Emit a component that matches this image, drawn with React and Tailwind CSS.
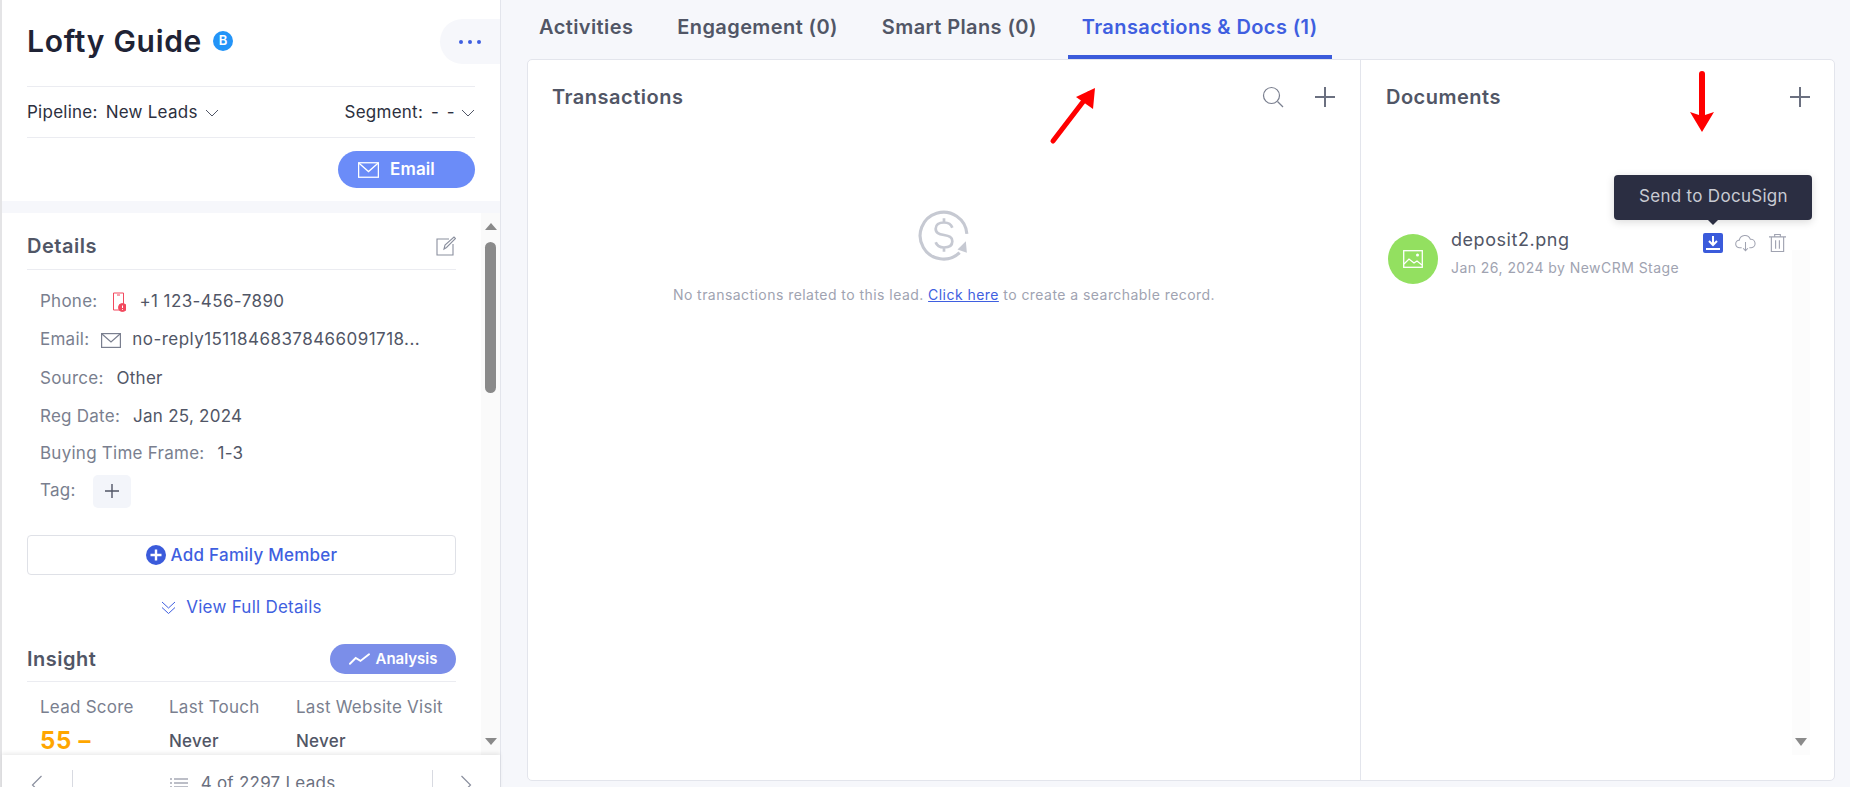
import React from "react";

const Chevron = ({ className = "" }) => (
  <svg viewBox="0 0 14 8" className={className} fill="none" stroke="currentColor" strokeWidth="1">
    <path d="M1 1l6 6 6-6" />
  </svg>
);

const Plus = ({ className = "" }) => (
  <svg viewBox="0 0 20 20" className={className} fill="none" stroke="currentColor" strokeWidth="2">
    <path d="M10 0v20M0 10h20" />
  </svg>
);

const Mail = ({ className = "" }) => (
  <svg viewBox="0 0 20 15" className={className} fill="none" stroke="currentColor" strokeWidth="1.2">
    <rect x="0.6" y="0.6" width="18.8" height="13.8" />
    <path d="M1 1l9 8 9-8" />
  </svg>
);

const Row = ({ label, children, className = "" }) => (
  <div className={`flex items-center h-[38px] pl-[13px] text-[17px] tracking-[0.25px] ${className}`}>
    <span className="text-[#7a7f8f] whitespace-nowrap">{label}</span>
    {children}
  </div>
);

const Tab = ({ children, active, className = "" }) => (
  <div
    className={`h-[59px] flex items-start pt-[15px] text-[20px] leading-[24px] tracking-[0.4px] font-semibold whitespace-nowrap border-b-[4px] ${
      active ? "text-[#3f5fe0] border-[#3b5bdb] px-[14px]" : "text-[#515666] border-transparent"
    } ${className}`}
  >
    {children}
  </div>
);

export default function App() {
  return (
    <div
      className="relative flex w-[1850px] h-[787px] overflow-hidden bg-[#f6f7fb]"
      style={{ fontFamily: "Inter, 'Noto Sans', sans-serif" }}
    >
      {/* Left panel */}
      <aside className="w-[501px] h-full flex flex-col shrink-0 border-l-2 border-r border-l-[#e4e4e6] border-r-[#e3e5ec] bg-[#f6f7fb]">
        <div className="h-[201px] bg-white pl-[25px] shrink-0">
          <div className="h-[86px] flex items-start">
            <div className="flex items-center pt-[22px]">
              <span className="text-[30px] leading-[38px] tracking-[0.7px] font-semibold text-[#1f2335] whitespace-nowrap">Lofty Guide</span>
              <span className="ml-[11px] w-[20px] h-[20px] rounded-full bg-[#2394f8] text-white text-[13px] font-semibold flex items-center justify-center">B</span>
            </div>
            <button className="ml-auto mt-[19px] w-[60px] h-[45px] rounded-l-[23px] bg-[#f6f7fb] flex items-center justify-center gap-[5px]">
              <i className="w-[4px] h-[4px] rounded-full bg-[#3f5fe0]" />
              <i className="w-[4px] h-[4px] rounded-full bg-[#3f5fe0]" />
              <i className="w-[4px] h-[4px] rounded-full bg-[#3f5fe0]" />
            </button>
          </div>
          <div className="w-[448px] border-t border-b border-[#ebecf1] h-[52px] pt-[2px] flex items-center justify-between text-[17px] tracking-[0.25px] text-[#2c3040]">
            <div className="flex items-center whitespace-nowrap">
              Pipeline:<span className="ml-[8px]">New Leads</span>
              <Chevron className="w-[14px] h-[8px] ml-[7px] text-[#515666]" />
            </div>
            <div className="flex items-center whitespace-nowrap">
              Segment:<span className="ml-[8px] tracking-[1.5px]">- -</span>
              <Chevron className="w-[14px] h-[8px] ml-[5px] text-[#515666]" />
            </div>
          </div>
          <div className="w-[448px] flex justify-end mt-[13px]">
            <button className="w-[137px] h-[37px] rounded-full bg-[#6b8cf8] text-white text-[17px] tracking-[0.1px] font-semibold flex items-center justify-center gap-[11px] pr-[20px]">
              <Mail className="w-[21px] h-[16px]" />
              Email
            </button>
          </div>
        </div>

        <div className="h-[12px] shrink-0" />

        <div className="relative h-[542px] shrink-0 bg-white overflow-hidden flex">
          <div className="w-[479px] pl-[25px] pr-[25px] shrink-0">
            <div className="h-[57px] border-b border-[#ebecf1] flex items-center justify-between pt-[9px] text-[20px] tracking-[0.5px] font-semibold text-[#515666]">
              Details
              <svg viewBox="0 0 20 20" className="w-[20px] h-[20px] text-[#8a8f9e]" fill="none" stroke="currentColor" strokeWidth="1.1">
                <path d="M13 3H1v16h16V8" />
                <path d="M8 13l1-4 9-8 1.5 1.5-9 9z" />
              </svg>
            </div>
            <div className="pt-[13px]">
              <Row label="Phone:">
                <svg viewBox="0 0 14 20" className="w-[14px] h-[20px] ml-[15px] text-[#f2495e]" fill="none" stroke="currentColor" strokeWidth="1">
                  <path d="M7 18H1.5V1h10v11" />
                  <path d="M5 3h3" />
                  <circle cx="10.5" cy="15.5" r="4" fill="currentColor" />
                  <path d="M10.5 13.5v2.5M10.5 17v.8" stroke="#fff" />
                </svg>
                <span className="ml-[13px] text-[#515666] tracking-[0.4px]">+1 123-456-7890</span>
              </Row>
              <Row label="Email:">
                <Mail className="w-[20px] h-[15px] ml-[12px] text-[#7a7f8f]" />
                <span className="ml-[11px] text-[#515666] tracking-[0.45px] w-[300px] truncate">no-reply15118468378466091718...</span>
              </Row>
              <Row label="Source:" className="pt-[1px]">
                <span className="ml-[13px] text-[#515666]">Other</span>
              </Row>
              <Row label="Reg Date:" className="pt-[1px]">
                <span className="ml-[13px] text-[#515666]">Jan 25, 2024</span>
              </Row>
              <Row label="Buying Time Frame:">
                <span className="ml-[13px] text-[#515666]">1-3</span>
              </Row>
              <Row label="Tag:" className="-mt-[1px]">
                <span className="ml-[17px] w-[38px] h-[33px] rounded-[5px] bg-[#f3f5fa] flex items-center justify-center text-[#515666]">
                  <Plus className="w-[14px] h-[14px]" />
                </span>
              </Row>
            </div>
            <button className="mt-[25px] w-full h-[40px] pt-[2px] border border-[#dfe1e7] rounded-[4px] flex items-center justify-center text-[17px] tracking-[0.25px] font-medium text-[#3f5fe0]">
              <svg viewBox="0 0 20 20" className="w-[20px] h-[20px] mr-[5px] -mt-[2px]">
                <circle cx="10" cy="10" r="10" fill="#3b5bdb" />
                <path d="M10 4.5v11M4.5 10h11" stroke="#fff" strokeWidth="2.4" />
              </svg>
              Add Family Member
            </button>
            <div className="mt-[20px] h-[26px] flex items-center justify-center text-[17px] tracking-[0.25px] text-[#3f5fe0]">
              <svg viewBox="0 0 14 14" className="w-[15px] h-[14px] mr-[10px]" fill="none" stroke="currentColor" strokeWidth="1">
                <path d="M0.5 1l6.5 6 6.5-6M0.5 6.5l6.5 6 6.5-6" />
              </svg>
              View Full Details
            </div>
            <div className="mt-[23px] h-[38px] border-b border-[#ebecf1] flex items-start justify-between">
              <span className="text-[20px] leading-[30px] tracking-[0.5px] font-semibold text-[#515666]">Insight</span>
              <button className="w-[126px] h-[30px] rounded-full bg-[#7b8ee9] text-white text-[15px] font-semibold flex items-center justify-center gap-[6px]">
                <svg viewBox="0 0 22 12" className="w-[21px] h-[12px]" fill="none" stroke="currentColor" strokeWidth="2" strokeLinecap="round">
                  <path d="M1 11l6-6 5 3 9-7" />
                </svg>
                Analysis
              </button>
            </div>
            <div className="flex pl-[13px] pt-[15px] text-[17px] tracking-[0.25px]">
              <div className="w-[129px]">
                <div className="text-[#7a7f8f] leading-[20px] whitespace-nowrap">Lead Score</div>
                <div className="text-[24px] leading-[28px] mt-[10px] font-bold tracking-[0.7px] text-[#ffa600]">55 –</div>
              </div>
              <div className="w-[127px]">
                <div className="text-[#7a7f8f] leading-[20px] whitespace-nowrap">Last Touch</div>
                <div className="mt-[14px] leading-[20px] font-medium text-[#515666]">Never</div>
              </div>
              <div>
                <div className="text-[#7a7f8f] leading-[20px] whitespace-nowrap">Last Website Visit</div>
                <div className="mt-[14px] leading-[20px] font-medium text-[#515666]">Never</div>
              </div>
            </div>
          </div>
          <div className="relative w-[19px] shrink-0 bg-[#fafafa] flex flex-col items-center pt-[10px]">
            <i className="w-0 h-0 border-x-[6px] border-x-transparent border-b-[7px] border-b-[#8a8a8a]" />
            <i className="mt-[12px] w-[11px] h-[151px] rounded-[6px] bg-[#8a8a8a]" />
            <i className="mt-auto mb-[10px] w-0 h-0 border-x-[6px] border-x-transparent border-t-[7px] border-t-[#8a8a8a]" />
          </div>
        </div>

        <div className="relative flex-1 bg-white shadow-[0_-2px_4px_rgba(0,0,0,0.08)] flex items-start text-[#515666]">
          <div className="w-[70px] h-full flex pt-[20px] justify-start pl-[28px]">
            <svg viewBox="0 0 12 20" className="w-[13px] h-[20px] text-[#8a8f9e]" fill="none" stroke="currentColor" strokeWidth="1.2"><path d="M11 1L2 10l9 9" /></svg>
          </div>
          <div className="mt-[15px] flex-1 h-[17px] border-x border-[#d8dae1] flex items-start justify-center">
            <div className="flex items-center pt-[3px] text-[17px] tracking-[0.25px] whitespace-nowrap leading-[20px] text-[#6b7080]">
              <svg viewBox="0 0 18 10" className="w-[18px] h-[10px] mr-[13px] text-[#7a7f8f]" fill="none" stroke="currentColor" strokeWidth="1.2">
                <path d="M4 1h14M4 5h14M4 9h14M0 1h2M0 5h2M0 9h2" />
              </svg>
              4 of 2297 Leads
            </div>
          </div>
          <div className="w-[67px] h-full flex pt-[20px] pl-[27px]">
            <svg viewBox="0 0 12 20" className="w-[13px] h-[20px] text-[#8a8f9e]" fill="none" stroke="currentColor" strokeWidth="1.2"><path d="M1 1l9 9-9 9" /></svg>
          </div>
        </div>
      </aside>

      {/* Main */}
      <main className="flex-1 flex flex-col pl-[26px] pr-[15px] pb-[6px] min-w-0">
        <nav className="h-[59px] shrink-0 flex pl-[12px]">
          <Tab>Activities</Tab>
          <Tab className="ml-[44px]">Engagement (0)</Tab>
          <Tab className="ml-[44px]">Smart Plans (0)</Tab>
          <Tab active className="ml-[31px]">Transactions &amp; Docs (1)</Tab>
        </nav>
        <div className="flex-1 flex bg-white border border-[#e3e5ec] rounded-[5px] min-h-0">
          <section className="w-[833px] border-r border-[#e3e5ec] shrink-0 flex flex-col">
            <div className="h-[74px] flex items-center justify-between pl-[24px] pr-[25px] text-[20px] tracking-[0.5px] font-semibold text-[#515666]">
              Transactions
              <div className="flex items-center gap-[31px]">
                <svg viewBox="0 0 22 22" className="w-[22px] h-[22px] text-[#7a7f8f]" fill="none" stroke="currentColor" strokeWidth="1.2">
                  <circle cx="9.5" cy="9.5" r="8" />
                  <path d="M15.5 15.5L21 21" />
                </svg>
                <Plus className="w-[20px] h-[20px] text-[#6b7080]" />
              </div>
            </div>
            <div className="flex flex-col items-center pt-[75px]">
              <svg viewBox="0 0 50 50" className="w-[52px] h-[52px] text-[#c6c9d2]" fill="none" stroke="currentColor" strokeWidth="3">
                <path d="M47 24A22.5 22.5 0 1 0 40 42" />
                <path d="M46 31l1 11-9-3z" fill="currentColor" stroke="none" />
                <path d="M33 18c-1-3-4-5-8-5-5 0-8 2-8 6s3 5 8 6 8 2 8 6-3 6-8 6c-4 0-7-2-8-5M25 9v4M25 37v4" strokeWidth="2.6" />
              </svg>
              <p className="mt-[24px] text-[14px] tracking-[0.45px] leading-[20px] text-[#a0a3b1] whitespace-nowrap">
                No transactions related to this lead. <a className="text-[#3f5fe0] underline">Click here</a> to create a searchable record.
              </p>
            </div>
          </section>
          <section className="flex-1 flex flex-col pl-[25px] min-w-0">
            <div className="h-[74px] shrink-0 flex items-center justify-between pr-[24px] text-[20px] tracking-[0.5px] font-semibold text-[#515666]">
              Documents
              <Plus className="w-[20px] h-[20px] text-[#6b7080]" />
            </div>
            <div className="flex-1 flex min-h-0">
              <div className="w-[401px] shrink-0 pt-[100px] pl-[2px] flex items-start">
                <div className="w-[50px] h-[50px] rounded-full bg-[#93e060] flex items-center justify-center shrink-0">
                  <svg viewBox="0 0 20 18" className="w-[20px] h-[18px]" fill="none" stroke="#fff" strokeWidth="1.3">
                    <rect x="0.7" y="0.7" width="18.6" height="16.6" />
                    <path d="M1 14l5-5 5 4 3-2 5 4" />
                    <circle cx="14.5" cy="5" r="1.5" fill="#fff" stroke="none" />
                  </svg>
                </div>
                <div className="ml-[13px] -mt-[5px]">
                  <div className="text-[18px] leading-[22px] tracking-[0.55px] text-[#515666] whitespace-nowrap">deposit2.png</div>
                  <div className="mt-[8px] text-[14px] leading-[18px] tracking-[0.45px] text-[#a0a3b1] whitespace-nowrap">Jan 26, 2024 by NewCRM Stage</div>
                </div>
                <div className="ml-auto -mt-[1px] mr-[1px] flex items-center">
                  <span className="w-[20px] h-[20px] rounded-[2px] bg-[#3b5bdb] flex items-center justify-center">
                    <svg viewBox="0 0 14 14" className="w-[14px] h-[14px]" fill="none" stroke="#fff" strokeWidth="2">
                      <path d="M7 0v8M3 5l4 4 4-4M0 13h14" />
                    </svg>
                  </span>
                  <svg viewBox="0 0 22 18" className="ml-[12px] w-[21px] h-[18px] text-[#a0a3b1]" fill="none" stroke="currentColor" strokeWidth="1.1">
                    <path d="M7 14H5a4 4 0 0 1-.5-8A6 6 0 0 1 16 5a4.5 4.5 0 0 1 1 9h-2" />
                    <path d="M11 8v9M8.5 14.5l2.5 2.5 2.5-2.5" />
                  </svg>
                  <svg viewBox="0 0 18 20" className="ml-[13px] w-[17px] h-[20px] text-[#a0a3b1]" fill="none" stroke="currentColor" strokeWidth="1.2">
                    <path d="M0 3.5h18M6 3.5V1h6v2.5M2.5 3.5V19h13V3.5M7 7v9M11 7v9" />
                  </svg>
                </div>
              </div>
              <div className="w-[18px] shrink-0 h-[695px] -mt-[74px] ml-[5px] flex flex-col items-center">
                <div className="mt-[190px] w-full flex-1 bg-[#fcfcfc] flex flex-col items-center">
                  <i className="mt-auto mb-[9px] w-0 h-0 border-x-[6px] border-x-transparent border-t-[8px] border-t-[#8a8a8a]" />
                </div>
              </div>
            </div>
          </section>
        </div>
      </main>

      {/* Tooltip */}
      <div className="absolute left-[1614px] top-[175px] w-[198px] h-[45px] rounded-[4px] bg-[#2b2e42] text-[#c8cad2] text-[17px] tracking-[0.3px] flex items-center pl-[25px] pb-[2px] shadow-[0_2px_8px_rgba(0,0,0,0.15)]">
        Send to DocuSign
        <i className="absolute left-[94px] top-full w-0 h-0 border-x-[5px] border-x-transparent border-t-[5px] border-t-[#2b2e42]" />
      </div>

      {/* Annotation arrows */}
      <svg className="absolute left-[1045px] top-[80px] w-[60px] h-[70px]" viewBox="0 0 60 70" fill="none">
        <path d="M8 61L44 14" stroke="#ff0000" strokeWidth="5" strokeLinecap="round" />
        <path d="M50 8l-2 21-17-12z" fill="#ff0000" />
      </svg>
      <svg className="absolute left-[1685px] top-[68px] w-[34px] h-[68px]" viewBox="0 0 34 68" fill="none">
        <path d="M17 6v46" stroke="#ff0000" strokeWidth="6" strokeLinecap="round" />
        <path d="M5 44l12 20 12-20-12 4z" fill="#ff0000" />
      </svg>
    </div>
  );
}
